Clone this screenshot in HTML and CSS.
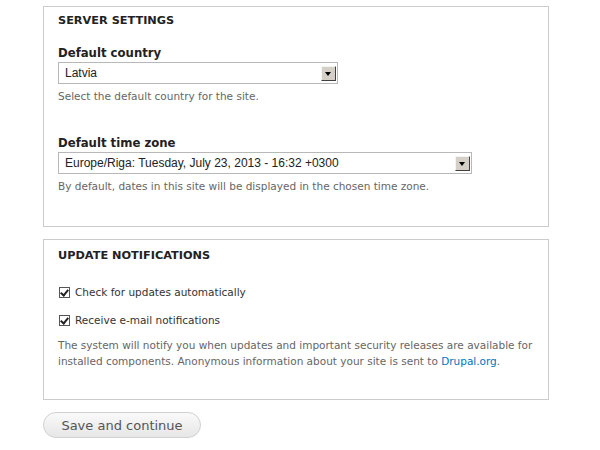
FILE: index.html
```html
<!DOCTYPE html>
<html lang="en">
<head>
<meta charset="UTF-8">
<title>Configure site</title>
<link rel="stylesheet" href="styles.css">
</head>
<body>

<div class="panel panel-server">
  <h2 class="panel-title">Server settings</h2>

  <div class="form-item">
    <label class="form-label">Default country</label>
    <div class="select select-country">
      <span class="select-value">Latvia</span>
      <span class="select-arrow"></span>
    </div>
    <div class="description">Select the default country for the site.</div>
  </div>

  <div class="form-item">
    <label class="form-label">Default time zone</label>
    <div class="select select-zone">
      <span class="select-value">Europe/Riga: Tuesday, July 23, 2013 - 16:32 +0300</span>
      <span class="select-arrow"></span>
    </div>
    <div class="description">By default, dates in this site will be displayed in the chosen time zone.</div>
  </div>
</div>

<div class="panel panel-update">
  <h2 class="panel-title">Update notifications</h2>

  <div class="checkbox-row">
    <span class="checkbox checked"></span>
    <span class="checkbox-label">Check for updates automatically</span>
  </div>
  <div class="checkbox-row">
    <span class="checkbox checked"></span>
    <span class="checkbox-label">Receive e-mail notifications</span>
  </div>
  <div class="description note">
    The system will notify you when updates and important security releases are available for
    installed components. Anonymous information about your site is sent to <a href="#">Drupal.org</a>.
  </div>
</div>

<button class="button">Save and continue</button>

</body>
</html>
```

FILE: styles.css
```css
body {
  margin: 6px 0 0 43px;
  width: 506px;
  background-color: #fff;
  font-family: "DejaVu Sans", sans-serif;
  color: #333;
}

.panel {
  border: 1px solid #ccc;
  padding: 7px 14px 0 14px;
  box-sizing: border-box;
}

.panel-server {
  height: 221px;
}

.panel-update {
  height: 161px;
  margin-top: 12px;
  padding-top: 9px;
}

.panel-title {
  margin: 0;
  font-size: 11.3px;
  font-weight: bold;
  text-transform: uppercase;
  line-height: 14px;
  color: #222;
}

.form-item {
  margin-top: 17px;
}

.form-item + .form-item {
  margin-top: 31px;
}

.form-label {
  display: block;
  font-family: "DejaVu Sans Condensed", "DejaVu Sans", sans-serif;
  font-size: 13px;
  font-weight: bold;
  line-height: 16px;
  color: #222;
  margin-bottom: 1px;
}

.select {
  display: flex;
  align-items: center;
  height: 22px;
  box-sizing: border-box;
  border: 1px solid #b8b8b8;
  background-color: #fff;
  padding: 0 1px 0 6px;
  font-family: "Liberation Sans", Arial, sans-serif;
  font-size: 12px;
  color: #222;
}

.select-country {
  width: 280px;
}

.select-zone {
  width: 414px;
}

.select-value {
  flex: 1;
}

.select-arrow {
  position: relative;
  width: 15px;
  height: 15px;
  box-sizing: border-box;
  background-color: #d4d0c8;
  border-top: 1px solid #f4f4f0;
  border-left: 1px solid #f4f4f0;
  border-right: 1px solid #404040;
  border-bottom: 1px solid #404040;
}

.select-arrow::after {
  content: "";
  position: absolute;
  left: 3px;
  top: 5px;
  border-left: 3.5px solid transparent;
  border-right: 3.5px solid transparent;
  border-top: 4px solid #000;
}

.description {
  margin-top: 5px;
  font-size: 10.5px;
  line-height: 15px;
  color: #666;
}

.checkbox-row {
  display: flex;
  align-items: center;
  margin-top: 23px;
  font-size: 10.5px;
  color: #333;
}

.checkbox-row + .checkbox-row {
  margin-top: 16px;
}

.checkbox {
  position: relative;
  width: 11px;
  height: 11px;
  box-sizing: border-box;
  border: 1px solid #555;
  background-color: #fff;
  margin: 0 5px 0 1px;
}

.checkbox.checked::after {
  content: "";
  position: absolute;
  left: 2px;
  top: 0px;
  width: 3px;
  height: 6px;
  border-right: 2px solid #222;
  border-bottom: 2px solid #222;
  transform: rotate(40deg);
}

.note {
  margin-top: 11px;
  line-height: 16px;
}

.note a {
  color: #0074bd;
  text-decoration: none;
}

.button {
  display: block;
  margin-top: 12px;
  width: 158px;
  height: 26px;
  border: 1px solid #d0d0d0;
  border-radius: 13px;
  background: linear-gradient(#fafafa, #e6e6e6);
  font-family: "DejaVu Sans", sans-serif;
  font-size: 13px;
  color: #555;
  cursor: pointer;
}
```
